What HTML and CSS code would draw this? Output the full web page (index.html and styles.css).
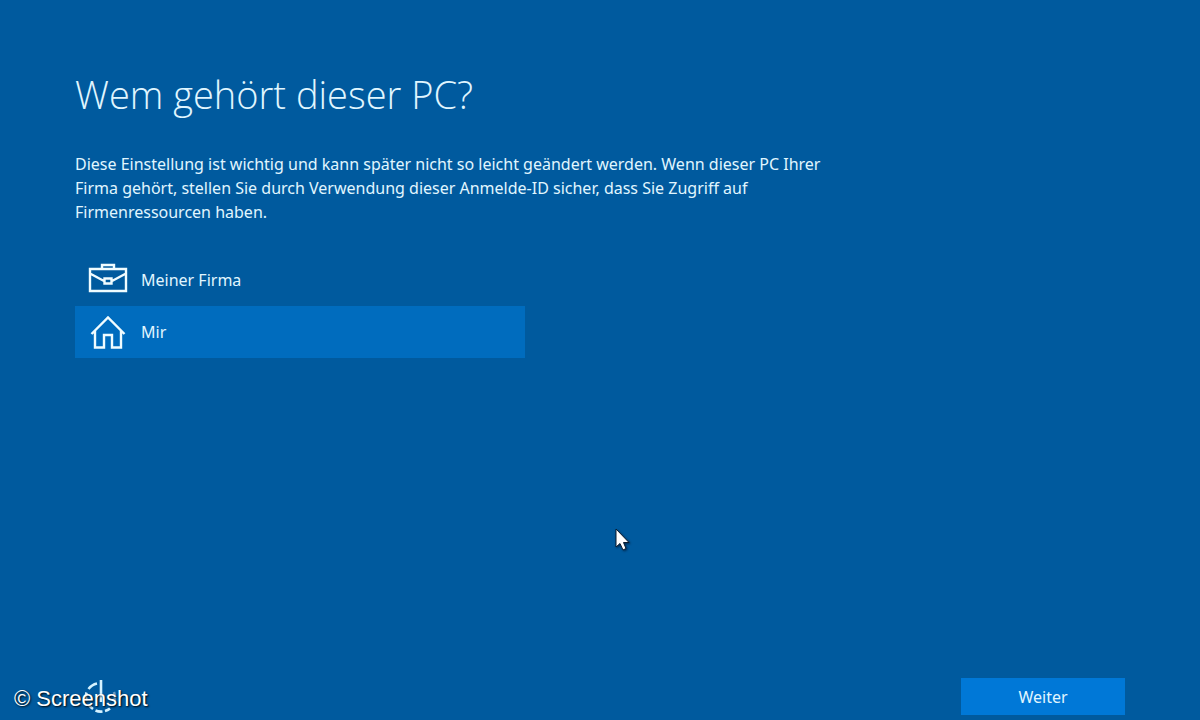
FILE: index.html
```html
<!DOCTYPE html>
<html lang="de">
<head>
    <meta charset="UTF-8">
    <meta name="viewport" content="width=device-width, initial-scale=1.0">
    <title>Wem gehört dieser PC?</title>
    <link rel="stylesheet" href="styles.css">
</head>
<body>

    <form class="setup">
        <main class="content">
            <h1 id="question">Wem gehört dieser PC?</h1>
            <p class="intro">Diese Einstellung ist wichtig und kann später nicht so leicht geändert werden. Wenn dieser PC Ihrer Firma gehört, stellen Sie durch Verwendung dieser Anmelde-ID sicher, dass Sie Zugriff auf Firmenressourcen haben.</p>

            <!-- Owner choice -->
            <div class="options" role="radiogroup" aria-labelledby="question">
                <label class="option" for="owner-company">
                    <input type="radio" name="owner" id="owner-company" value="company">
                    <svg class="icon" viewBox="0 0 40 36" aria-hidden="true">
                        <path d="M2 7H38V29H2Z M14 7V3H26V7 M2 11.500L16 19 M24 19L38 11.500 M16.500 16.500H23.500V21.500H16.500Z"/>
                    </svg>
                    <span>Meiner Firma</span>
                </label>
                <label class="option" for="owner-me">
                    <input type="radio" name="owner" id="owner-me" value="me" checked>
                    <svg class="icon" viewBox="0 0 40 36" aria-hidden="true">
                        <path d="M3.500 20L20 3.500L36.500 20 M7 17V33.500H16V21H24V33.500H33V17"/>
                    </svg>
                    <span>Mir</span>
                </label>
            </div>
        </main>

        <!-- Bottom bar -->
        <footer class="bottom-bar">
            <button type="button" class="power" aria-label="Ein/Aus">
                <svg viewBox="0 0 36 36" aria-hidden="true">
                    <path d="M18 1V23"/>
                    <path d="M14 4.500A14.500 14.500 0 0 0 5.500 10 M3.500 13.500A14.500 14.500 0 0 0 3.500 22 M6 26A14.500 14.500 0 0 0 10 30 M12.500 31.500A14.500 14.500 0 0 0 19.500 32.500 M22 32A14.500 14.500 0 0 0 27 29.500"/>
                    <path class="faint" d="M31.500 22A14 14 0 0 0 31 13"/>
                </svg>
            </button>
            <button type="submit" class="next">Weiter</button>
        </footer>
    </form>

    <div class="credit">© Screenshot</div>

    <!-- Mouse pointer -->
    <svg class="pointer" viewBox="0 0 18 26" aria-hidden="true">
        <path d="M2 2V20L6 16.500L9 23L12 21.500L9.500 15.500H15Z"/>
    </svg>

</body>
</html>
```

FILE: styles.css
```css
* {
    box-sizing: border-box;
}

body {
    margin: 0;
    background-color: #005a9e;
    color: #e0f6ff;
    font-family: "Noto Sans", "Open Sans", sans-serif;
    font-size: 16px;
    line-height: 24px;
}

.setup {
    display: flex;
    flex-direction: column;
    min-height: 100vh;
    padding: 68px 75px 5px;
}

.content {
    flex: 1;
}

h1 {
    margin: 0 0 32px;
    font-family: "Open Sans", "Noto Sans", sans-serif;
    font-size: 38px;
    font-weight: 300;
    line-height: 52px;
}

.intro {
    max-width: 770px;
    margin: 0 0 30px;
}

/* Owner choice */
.options {
    display: flex;
    flex-direction: column;
    max-width: 450px;
}

.option {
    display: flex;
    align-items: center;
    gap: 13px;
    height: 52px;
    padding: 0 13px;
    cursor: pointer;
}

.option:has(input:checked) {
    background-color: #006cbe;
}

/* The whole row shows the state, so the circle is hidden */
.option input {
    appearance: none;
    position: absolute;
    margin: 0;
}

.icon {
    width: 40px;
    height: 36px;
    fill: none;
    stroke: #f0fcff;
    stroke-width: 2.4;
}

/* Bottom bar */
.bottom-bar {
    display: flex;
    justify-content: space-between;
    align-items: center;
}

.power {
    width: 52px;
    height: 36px;
    padding: 0 8px;
    border: 0;
    background: none;
}

.power svg {
    display: block;
    width: 36px;
    height: 36px;
    fill: none;
    stroke: #d5f2ff;
    stroke-width: 2.6;
}

.power .faint {
    stroke: #6c9dc4;
}

.next {
    width: 164px;
    height: 37px;
    padding: 0;
    border: 0;
    background-color: #0078d7;
    color: inherit;
    font: inherit;
}

/* Credit line over the bottom bar */
.credit {
    position: absolute;
    bottom: 9px;
    left: 14px;
    color: #fff;
    font-family: "Liberation Sans", Arial, sans-serif;
    font-size: 22px;
    text-shadow: 1px 1px 2px #000;
    pointer-events: none;
}

.pointer {
    position: absolute;
    top: 527px;
    left: 614px;
    width: 18px;
    height: 26px;
    fill: #fff;
    stroke: #0a1c30;
    filter: drop-shadow(1px 1px 1px #002a50);
    pointer-events: none;
}
```
